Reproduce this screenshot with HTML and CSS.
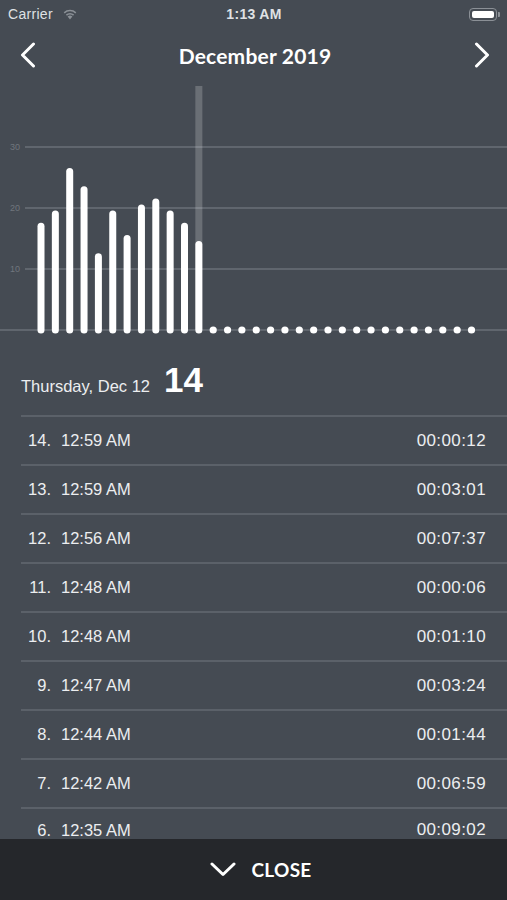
FILE: index.html
```html
<!DOCTYPE html>
<html lang="en">
<head>
    <meta charset="UTF-8">
    <meta name="viewport" content="width=device-width, initial-scale=1.0">
    <title>December 2019</title>
    <link rel="stylesheet" href="styles.css">
</head>
<body>
    <div class="screen">
        <div class="status-bar">
            <div class="status-left">
                <span class="carrier">Carrier</span>
                <svg class="wifi" width="16" height="12" viewBox="0 0 16 12">
                    <path d="M8 11.5 L5.6 8.6 A3.6 3.6 0 0 1 10.4 8.6 Z" />
                    <path d="M3.9 6.6 A6.2 6.2 0 0 1 12.1 6.6 L11.1 7.8 A4.7 4.7 0 0 0 4.9 7.8 Z" />
                    <path d="M1.7 4.2 A9.3 9.3 0 0 1 14.3 4.2 L13.3 5.4 A7.8 7.8 0 0 0 2.7 5.4 Z" />
                </svg>
            </div>
            <span class="clock">1:13 AM</span>
            <div class="status-right">
                <span class="battery"><span class="battery-level"></span></span>
                <span class="battery-nub"></span>
            </div>
        </div>

        <div class="nav">
            <button class="nav-btn">
                <svg width="16" height="26" viewBox="0 0 16 26">
                    <polyline points="13.5,2 2.5,13 13.5,24" />
                </svg>
            </button>
            <h1 class="nav-title">December 2019</h1>
            <button class="nav-btn">
                <svg width="16" height="26" viewBox="0 0 16 26">
                    <polyline points="2.5,2 13.5,13 2.5,24" />
                </svg>
            </button>
        </div>

        <svg class="chart" width="507" height="264" viewBox="0 0 507 264">
            <!-- grid -->
            <line class="grid" x1="25" y1="63" x2="507" y2="63" />
            <line class="grid" x1="25" y1="124" x2="507" y2="124" />
            <line class="grid" x1="25" y1="185" x2="507" y2="185" />
            <line class="grid" x1="0" y1="246" x2="507" y2="246" />
            <text class="axis" x="20" y="66">30</text>
            <text class="axis" x="20" y="127">20</text>
            <text class="axis" x="20" y="188">10</text>

            <!-- selected day -->
            <rect class="selected" x="195.35" y="2" width="7" height="244" />

            <!-- days with sessions -->
            <line class="bar" x1="41" y1="246" x2="41" y2="142.3" />
            <line class="bar" x1="55.35" y1="246" x2="55.35" y2="130.1" />
            <line class="bar" x1="69.7" y1="246" x2="69.7" y2="87.4" />
            <line class="bar" x1="84.05" y1="246" x2="84.05" y2="105.7" />
            <line class="bar" x1="98.4" y1="246" x2="98.4" y2="172.8" />
            <line class="bar" x1="112.75" y1="246" x2="112.75" y2="130.1" />
            <line class="bar" x1="127.1" y1="246" x2="127.1" y2="154.5" />
            <line class="bar" x1="141.45" y1="246" x2="141.45" y2="124" />
            <line class="bar" x1="155.8" y1="246" x2="155.8" y2="117.9" />
            <line class="bar" x1="170.15" y1="246" x2="170.15" y2="130.1" />
            <line class="bar" x1="184.5" y1="246" x2="184.5" y2="142.3" />
            <line class="bar" x1="198.85" y1="246" x2="198.85" y2="160.6" />

            <!-- empty days -->
            <circle class="dot" cx="213.2" cy="246" r="3.6" />
            <circle class="dot" cx="227.55" cy="246" r="3.6" />
            <circle class="dot" cx="241.9" cy="246" r="3.6" />
            <circle class="dot" cx="256.25" cy="246" r="3.6" />
            <circle class="dot" cx="270.6" cy="246" r="3.6" />
            <circle class="dot" cx="284.95" cy="246" r="3.6" />
            <circle class="dot" cx="299.3" cy="246" r="3.6" />
            <circle class="dot" cx="313.65" cy="246" r="3.6" />
            <circle class="dot" cx="328" cy="246" r="3.6" />
            <circle class="dot" cx="342.35" cy="246" r="3.6" />
            <circle class="dot" cx="356.7" cy="246" r="3.6" />
            <circle class="dot" cx="371.05" cy="246" r="3.6" />
            <circle class="dot" cx="385.4" cy="246" r="3.6" />
            <circle class="dot" cx="399.75" cy="246" r="3.6" />
            <circle class="dot" cx="414.1" cy="246" r="3.6" />
            <circle class="dot" cx="428.45" cy="246" r="3.6" />
            <circle class="dot" cx="442.8" cy="246" r="3.6" />
            <circle class="dot" cx="457.15" cy="246" r="3.6" />
            <circle class="dot" cx="471.5" cy="246" r="3.6" />
        </svg>

        <div class="day-summary">
            <span class="day-date">Thursday, Dec 12</span>
            <span class="day-count">14</span>
        </div>

        <ul class="sessions">
            <li class="session"><span class="session-index">14.</span><span class="session-time">12:59 AM</span><span class="session-duration">00:00:12</span></li>
            <li class="session"><span class="session-index">13.</span><span class="session-time">12:59 AM</span><span class="session-duration">00:03:01</span></li>
            <li class="session"><span class="session-index">12.</span><span class="session-time">12:56 AM</span><span class="session-duration">00:07:37</span></li>
            <li class="session"><span class="session-index">11.</span><span class="session-time">12:48 AM</span><span class="session-duration">00:00:06</span></li>
            <li class="session"><span class="session-index">10.</span><span class="session-time">12:48 AM</span><span class="session-duration">00:01:10</span></li>
            <li class="session"><span class="session-index">9.</span><span class="session-time">12:47 AM</span><span class="session-duration">00:03:24</span></li>
            <li class="session"><span class="session-index">8.</span><span class="session-time">12:44 AM</span><span class="session-duration">00:01:44</span></li>
            <li class="session"><span class="session-index">7.</span><span class="session-time">12:42 AM</span><span class="session-duration">00:06:59</span></li>
            <li class="session session-last"><span class="session-index">6.</span><span class="session-time">12:35 AM</span><span class="session-duration">00:09:02</span></li>
        </ul>

        <button class="close-bar">
            <svg width="26" height="15" viewBox="0 0 26 15">
                <polyline points="2,2 13,12.5 24,2" />
            </svg>
            <span>CLOSE</span>
        </button>
    </div>
</body>
</html>
```

FILE: styles.css
```css
* {
    margin: 0;
    padding: 0;
    box-sizing: border-box;
}

body {
    font-family: "Liberation Sans", Arial, sans-serif;
    background-color: #454b53;
    color: #ffffff;
}

.screen {
    display: flex;
    flex-direction: column;
    width: 507px;
    height: 900px;
    overflow: hidden;
    background-color: #454b53;
}

/* status bar */

.status-bar {
    display: flex;
    align-items: center;
    justify-content: space-between;
    height: 28px;
    padding: 0 7px 0 8px;
    font-size: 14px;
    color: #dfe1e4;
}

.status-left,
.status-right {
    display: flex;
    align-items: center;
    width: 100px;
}

.status-right {
    justify-content: flex-end;
}

.carrier {
    letter-spacing: 0.3px;
}

.wifi {
    margin-left: 9px;
    fill: #8b9096;
}

.clock {
    font-weight: bold;
    letter-spacing: 0.3px;
}

.battery {
    display: flex;
    width: 28px;
    height: 13px;
    padding: 2px;
    border: 1.5px solid #8b9096;
    border-radius: 4px;
}

.battery-level {
    flex: 1;
    background-color: #ffffff;
    border-radius: 2px;
}

.battery-nub {
    width: 2px;
    height: 5px;
    margin-left: 1px;
    background-color: #8b9096;
    border-radius: 0 1px 1px 0;
}

/* header */

.nav {
    display: flex;
    align-items: center;
    justify-content: space-between;
    height: 56px;
    padding: 0 17px 2px 20px;
}

.nav-btn {
    display: flex;
    background: none;
    border: none;
}

.nav-btn svg,
.close-bar svg {
    fill: none;
    stroke: #ffffff;
    stroke-width: 3;
    stroke-linecap: round;
    stroke-linejoin: round;
}

.nav-title {
    font-family: Lato, "Liberation Sans", sans-serif;
    font-size: 21px;
    font-weight: bold;
    letter-spacing: 0.2px;
}

/* chart */

.chart {
    display: block;
    flex-shrink: 0;
}

.grid {
    stroke: #60666e;
    stroke-width: 2;
}

.axis {
    font-size: 9px;
    fill: #70767d;
    text-anchor: end;
}

.selected {
    fill: rgba(255, 255, 255, 0.2);
}

.bar {
    stroke: #ffffff;
    stroke-width: 7;
    stroke-linecap: round;
}

.dot {
    fill: #ffffff;
}

/* selected day */

.day-summary {
    display: flex;
    align-items: baseline;
    flex-shrink: 0;
    height: 67px;
    padding: 12px 0 0 21px;
}

.day-date {
    font-size: 16.5px;
    color: #eceef0;
}

.day-count {
    margin-left: 14px;
    font-size: 35px;
    font-weight: bold;
}

/* sessions */

.sessions {
    flex: 1;
    overflow: hidden;
    list-style: none;
}

.session {
    display: flex;
    align-items: center;
    height: 49px;
    margin-left: 21px;
    padding-right: 21px;
    border-top: 2px solid #5b6169;
    font-size: 16.5px;
    color: #eceef0;
}

.session-last {
    height: 34px;
    padding-top: 10px;
}

.session-index {
    width: 30px;
    text-align: right;
}

.session-time {
    margin-left: 10px;
}

.session-duration {
    margin-left: auto;
    font-size: 17px;
    letter-spacing: 0.4px;
}

/* close */

.close-bar {
    display: flex;
    align-items: center;
    justify-content: center;
    gap: 15px;
    flex-shrink: 0;
    height: 61px;
    padding-left: 15px;
    background-color: #25272b;
    border: none;
    color: #ffffff;
    font-family: Lato, "Liberation Sans", sans-serif;
    font-size: 19px;
    font-weight: bold;
    letter-spacing: 0.3px;
}
```
